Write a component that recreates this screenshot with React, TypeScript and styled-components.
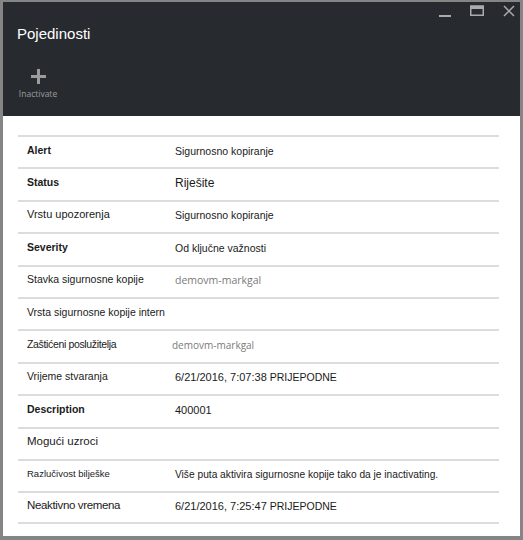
import React from "react";
import styled, { createGlobalStyle } from "styled-components";

const Global = createGlobalStyle`
  html, body { margin: 0; padding: 0; background: #ffffff; }
  body { font-family: "Liberation Sans", Arial, sans-serif; }
`;

const Frame = styled.div`
  width: 523px;
  height: 540px;
  box-sizing: border-box;
  border-style: solid;
  border-color: #858585;
  border-width: 2px 3px 4px 3px;
  display: flex;
  flex-direction: column;
  background: #ffffff;
`;

const Header = styled.header`
  height: 114px;
  background: #272b30;
  position: relative;
  display: flex;
  flex-direction: column;
  padding: 22px 0 0 14px;
  box-sizing: border-box;
`;

const Title = styled.h1`
  margin: 0;
  font-size: 15px;
  font-weight: normal;
  color: #ffffff;
  line-height: 20px;
`;

const Controls = styled.div`
  position: absolute;
  top: 3px;
  right: 5px;
  display: flex;
  gap: 19px;
  align-items: flex-start;
`;

const Toolbar = styled.div`
  display: flex;
  margin-top: 25px;
`;

const ToolButton = styled.button`
  background: none;
  border: none;
  padding: 0;
  width: 42px;
  display: flex;
  flex-direction: column;
  align-items: center;
  gap: 4px;
  color: #9a9c9e;
  font-family: "Open Sans", "Liberation Sans", sans-serif;
  font-size: 8.5px;
  cursor: pointer;
`;

const Body = styled.div`
  flex: 1;
  padding: 19px 21px 0 15px;
`;

const Row = styled.div`
  display: grid;
  grid-template-columns: 148px 1fr;
  align-items: center;
  height: 32.4px;
  box-sizing: border-box;
  border-top: 2px solid #dcdcdc;
  padding: 0 0 3px 9px;
  &:last-child { border-bottom: 2px solid #dcdcdc; }
`;

const Label = styled.div<{ $bold?: boolean; $size: number; $tight?: boolean }>`
  font-size: ${(p) => p.$size}px;
  font-weight: ${(p) => (p.$bold ? "bold" : "normal")};
  letter-spacing: ${(p) => (p.$tight ? "-0.35px" : "normal")};
  color: #1a1a1a;
  white-space: nowrap;
  margin-top: -2px;
`;

const Value = styled.div<{ $size: number; $shift?: number; $muted?: boolean }>`
  font-size: ${(p) => p.$size}px;
  margin-left: ${(p) => p.$shift ?? 0}px;
  color: ${(p) => (p.$muted ? "#7a7a7a" : "#1a1a1a")};
  font-family: ${(p) => (p.$muted ? `"Open Sans", "Liberation Sans", sans-serif` : "inherit")};
  white-space: nowrap;
`;

const Suffix = styled.span`
  font-size: 10.5px;
  margin-left: 3px;
`;

type Item = {
  label: string;
  bold?: boolean;
  tight?: boolean;
  lsize: number;
  value?: string;
  suffix?: string;
  vsize?: number;
  shift?: number;
  muted?: boolean;
};

const items: Item[] = [
  { label: "Alert", bold: true, lsize: 10.5, value: "Sigurnosno kopiranje", vsize: 10.5 },
  { label: "Status", bold: true, lsize: 10.5, value: "Riješite", vsize: 12 },
  { label: "Vrstu upozorenja", lsize: 11, value: "Sigurnosno kopiranje", vsize: 10.5 },
  { label: "Severity", bold: true, lsize: 10.5, value: "Od ključne važnosti", vsize: 10.5 },
  { label: "Stavka sigurnosne kopije", lsize: 10.5, value: "demovm-markgal", vsize: 10.5, muted: true },
  { label: "Vrsta sigurnosne kopije intern", lsize: 10.5 },
  { label: "Zaštićeni poslužitelja", lsize: 10.5, tight: true, value: "demovm-markgal", vsize: 10, muted: true, shift: -3 },
  { label: "Vrijeme stvaranja", lsize: 10.5, value: "6/21/2016, 7:07:38", suffix: "PRIJEPODNE", vsize: 11 },
  { label: "Description", bold: true, lsize: 10.5, value: "400001", vsize: 11 },
  { label: "Mogući uzroci", lsize: 11.5 },
  { label: "Razlučivost bilješke", lsize: 9.5, value: "Više puta aktivira sigurnosne kopije tako da je inactivating.", vsize: 10.2 },
  { label: "Neaktivno vremena", lsize: 11.5, tight: true, value: "6/21/2016, 7:25:47", suffix: "PRIJEPODNE", vsize: 11 },
];

export default function App() {
  return (
    <>
      <Global />
      <Frame>
        <Header>
          <Title>Pojedinosti</Title>
          <Controls>
            <svg width="12" height="14" viewBox="0 0 12 14">
              <rect x="0" y="10" width="12" height="2" fill="#a9abad" />
            </svg>
            <svg width="14" height="12" viewBox="0 0 14 12">
              <rect x="0.75" y="1" width="12.5" height="9.25" fill="none" stroke="#a9abad" strokeWidth="1.5" />
              <rect x="0" y="1" width="14" height="3" fill="#a9abad" />
            </svg>
            <svg width="12" height="12" viewBox="0 0 12 12">
              <path d="M1 1 L11 11 M11 1 L1 11" stroke="#a9abad" strokeWidth="1.5" />
            </svg>
          </Controls>
          <Toolbar>
            <ToolButton>
              <svg width="15" height="15" viewBox="0 0 15 15">
                <path d="M6 0h3v6h6v3H9v6H6V9H0V6h6z" fill="#9a9c9e" />
              </svg>
              <span>Inactivate</span>
            </ToolButton>
          </Toolbar>
        </Header>
        <Body>
          {items.map((it, i) => (
            <Row key={i}>
              <Label $bold={it.bold} $size={it.lsize} $tight={it.tight}>{it.label}</Label>
              {it.value ? (
                <Value $size={it.vsize ?? 11} $shift={it.shift} $muted={it.muted}>
                  {it.value}
                  {it.suffix && <Suffix>{it.suffix}</Suffix>}
                </Value>
              ) : (
                <span />
              )}
            </Row>
          ))}
        </Body>
      </Frame>
    </>
  );
}
